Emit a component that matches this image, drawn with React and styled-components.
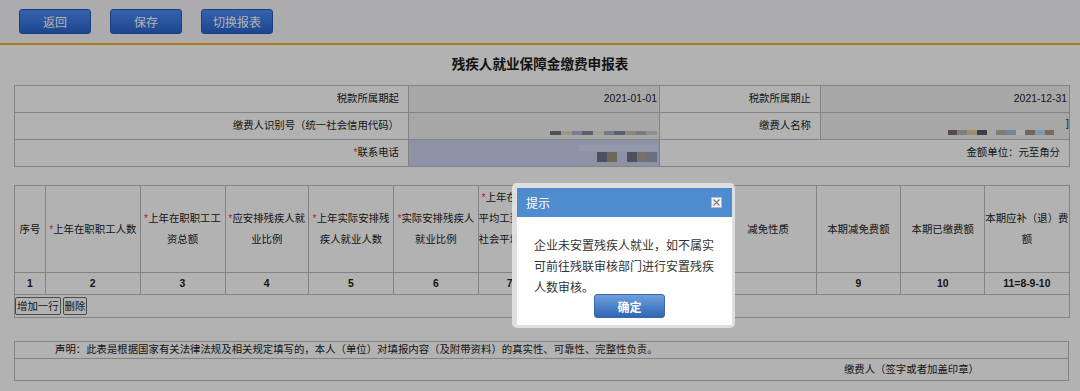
import styled, { createGlobalStyle } from 'styled-components';

const GlobalStyle = createGlobalStyle`
  body {
    margin: 0;
    background: #fff;
    font-family: "Liberation Sans", "Noto Sans CJK SC", sans-serif;
    color: #222;
  }
`;

const nameTiles = ['#72727e', '#e5d9c2', '#abb7e5', '#898995', '#f0e5d9', '#a0b7ce', '#8989a0', '#cec2ab', '#a0b7c2', '#cecece'];
const payerTiles = ['#7e6772', '#b7b7b7', '#e5cea0', '#5b5b67', 'transparent', '#b7b7a0', '#a0c2e5', '#fbfbfb', '#a0957e', '#b7d9f0', '#b7957e', '#f0f0f0'];
const phoneTiles = ['#727289', '#a0957e', 'transparent', '#727289', '#aca0a0', '#95a0b7'];

const colWidths = [31, 94.5, 85, 83.5, 85, 84.6, 63, 89.5, 89.5, 96, 84.6, 84, 84.4];
const numbers = ['1', '2', '3', '4', '5', '6', '7', '8', '', '', '9', '10', '11=8-9-10'];

export default function App() {
  return (
    <>
      <GlobalStyle />
      <Toolbar>
        <ToolButton>返回</ToolButton>
        <ToolButton>保存</ToolButton>
        <ToolButton>切换报表</ToolButton>
      </Toolbar>
      <Title>残疾人就业保障金缴费申报表</Title>
      <Content>
        <InfoTable>
          <colgroup>
            <col style={{ width: 394 }} />
            <col style={{ width: 251 }} />
            <col style={{ width: 161 }} />
            <col style={{ width: 249 }} />
          </colgroup>
          <tbody>
            <tr>
              <Label>税款所属期起</Label>
              <Value>2021-01-01</Value>
              <Label>税款所属期止</Label>
              <Value>2021-12-31</Value>
            </tr>
            <tr>
              <Label>缴费人识别号（统一社会信用代码）</Label>
              <Value $bottom>
                <Mosaic>{nameTiles.map((c, i) => <Tile key={i} $c={c} $w={10.7} $h={4} />)}</Mosaic>
              </Value>
              <Label>缴费人名称</Label>
              <Value $bottom>
                <Bracket>]</Bracket>
                <Mosaic $pad={3}>{payerTiles.map((c, i) => <Tile key={i} $c={c} $w={9.7} $h={5} />)}</Mosaic>
              </Value>
            </tr>
            <tr>
              <Label><Req>*</Req>联系电话</Label>
              <Value $tone="blue" $bottom>
                <Smear />
                <Mosaic>{phoneTiles.map((c, i) => <Tile key={i} $c={c} $w={10} $h={10} />)}</Mosaic>
              </Value>
              <Label colSpan={2}>金额单位：元至角分</Label>
            </tr>
          </tbody>
        </InfoTable>

        <GridTable>
          <colgroup>
            {colWidths.map((w, i) => (
              <col key={i} style={{ width: w }} />
            ))}
          </colgroup>
          <tbody>
            <HeadRow>
              <HeadCell>序号</HeadCell>
              <HeadCell><Req>*</Req>上年在职职工人数</HeadCell>
              <HeadCell><Req>*</Req>上年在职职工工<br />资总额</HeadCell>
              <HeadCell><Req>*</Req>应安排残疾人就<br />业比例</HeadCell>
              <HeadCell><Req>*</Req>上年实际安排残<br />疾人就业人数</HeadCell>
              <HeadCell><Req>*</Req>实际安排残疾人<br />就业比例</HeadCell>
              <HeadCell $top><Req>*</Req>上年在职工<br />平均工资（元）<br />社会平均工资</HeadCell>
              <HeadCell>本期应纳费额</HeadCell>
              <HeadCell>减免类型</HeadCell>
              <HeadCell>减免性质</HeadCell>
              <HeadCell>本期减免费额</HeadCell>
              <HeadCell>本期已缴费额</HeadCell>
              <HeadCell>本期应补（退）费<br />额</HeadCell>
            </HeadRow>
            <NumRow>
              {numbers.map((n, i) => (
                <NumCell key={i}>{n}</NumCell>
              ))}
            </NumRow>
            <tr>
              <ActionCell colSpan={13}>
                <SmallButton>增加一行</SmallButton>
                <SmallButton>删除</SmallButton>
              </ActionCell>
            </tr>
          </tbody>
        </GridTable>

        <NoteTable>
          <tbody>
            <tr>
              <NoteCell $h={16}>
                声明：此表是根据国家有关法律法规及相关规定填写的，本人（单位）对填报内容（及附带资料）的真实性、可靠性、完整性负责。
              </NoteCell>
            </tr>
            <tr>
              <NoteCell $h={21} $right>缴费人（签字或者加盖印章）</NoteCell>
            </tr>
          </tbody>
        </NoteTable>
      </Content>

      <Backdrop />
      <Dialog>
        <DialogHead>
          <span>提示</span>
          <CloseBox>
            <svg width="7" height="7" viewBox="0 0 7 7">
              <path d="M0.5 0.5 L6.5 6.5 M6.5 0.5 L0.5 6.5" stroke="#777" strokeWidth="1.1" />
            </svg>
          </CloseBox>
        </DialogHead>
        <DialogBody>
          <Message>
            企业未安置残疾人就业，如不属实<br />
            可前往残联审核部门进行安置残疾<br />
            人数审核。
          </Message>
          <ConfirmRow>
            <ConfirmButton>确定</ConfirmButton>
          </ConfirmRow>
        </DialogBody>
      </Dialog>
    </>
  );
}

const Toolbar = styled.div`
  display: flex;
  gap: 19px;
  height: 34px;
  padding: 9px 19px 0;
  background: #f7f7fb;
  border-bottom: 2px solid #ffae1a;
`;

const ToolButton = styled.button`
  width: 72px;
  height: 25px;
  padding: 0;
  border: 1px solid #295ab7;
  border-radius: 3px;
  background: linear-gradient(#4c8df9, #2b65ce);
  color: #fff;
  font-family: "Noto Sans CJK SC", sans-serif;
  font-size: 12px;
`;

const Title = styled.h1`
  margin: 8px 0 0;
  line-height: 20px;
  text-align: center;
  font-family: "Noto Sans CJK SC", sans-serif;
  font-size: 13.6px;
  font-weight: bold;
  color: #1a1a1a;
`;

const Content = styled.div`
  display: flex;
  flex-direction: column;
  padding: 0 11px 0 14px;
`;

const BaseTable = styled.table`
  width: 1055px;
  table-layout: fixed;
  border-collapse: collapse;
  font-size: 10.4px;
  line-height: 14px;
  color: #222;
  td {
    border: 1px solid #bcbcbc;
    padding: 0;
  }
`;

const InfoTable = styled(BaseTable)`
  margin-top: 12px;
  tr { height: 27px; }
`;

const Label = styled.td`
  text-align: right;
  padding-right: 9px !important;
  white-space: nowrap;
`;

const Value = styled.td`
  text-align: right;
  padding-right: 2px !important;
  background: ${p => (p.$tone === 'blue' ? '#cbd2f0' : '#f0f0f0')};
  vertical-align: ${p => (p.$bottom ? 'bottom' : 'middle')};
  padding-bottom: ${p => (p.$bottom ? '4px' : '0')} !important;
`;

const Req = styled.span`
  color: #ff3030;
`;

const Mosaic = styled.div`
  display: flex;
  justify-content: flex-end;
  padding-right: ${p => (p.$pad ?? 0)}px;
`;

const Tile = styled.span`
  display: block;
  width: ${p => p.$w}px;
  height: ${p => p.$h}px;
  background: ${p => p.$c};
`;

const Bracket = styled.div`
  line-height: 10px;
  color: #302060;
  margin-right: -2px;
  margin-bottom: 1px;
`;

const Smear = styled.div`
  width: 78px;
  height: 6px;
  margin-left: auto;
  margin-bottom: 1px;
  background: #d6ddf4;
`;

const GridTable = styled(BaseTable)`
  margin-top: 18px;
`;

const HeadRow = styled.tr`
  height: 87px;
`;

const HeadCell = styled.td`
  text-align: center;
  line-height: 21px;
  white-space: nowrap;
  overflow: hidden;
  vertical-align: ${p => (p.$top ? 'top' : 'middle')};
  padding-top: ${p => (p.$top ? '1px' : '0')} !important;
`;

const NumRow = styled.tr`
  height: 22px;
`;

const NumCell = styled.td`
  text-align: center;
  font-weight: bold;
  white-space: nowrap;
  overflow: hidden;
`;

const ActionCell = styled.td`
  height: 22px;
  vertical-align: middle;
`;

const SmallButton = styled.button`
  height: 18px;
  margin-right: 2px;
  padding: 0 1px;
  border: 1px solid #6a6a6a;
  border-radius: 2px;
  background: #fff;
  color: #222;
  font-family: "Noto Sans CJK SC", sans-serif;
  font-size: 10.4px;
  line-height: 16px;
`;

const NoteTable = styled(BaseTable)`
  margin-top: 23px;
`;

const NoteCell = styled.td`
  height: ${p => p.$h}px;
  text-align: ${p => (p.$right ? 'right' : 'left')};
  padding-left: ${p => (p.$right ? '0' : '40px')} !important;
  padding-right: ${p => (p.$right ? '89px' : '0')} !important;
  white-space: nowrap;
`;

const Backdrop = styled.div`
  position: fixed;
  inset: 0;
  background: rgba(0, 0, 0, 0.3);
  z-index: 10;
`;

const Dialog = styled.div`
  position: fixed;
  left: 512px;
  top: 183px;
  width: 223px;
  box-sizing: border-box;
  padding: 5px 3px 3px 5px;
  border-radius: 5px;
  background: rgba(225, 225, 225, 0.95);
  z-index: 11;
  font-family: "Noto Sans CJK SC", sans-serif;
`;

const DialogHead = styled.div`
  display: flex;
  align-items: center;
  justify-content: space-between;
  height: 29px;
  padding: 0 10px 0 9px;
  background: #4f8ccf;
  color: #fff;
  font-size: 12px;
`;

const CloseBox = styled.span`
  display: flex;
  align-items: center;
  justify-content: center;
  width: 11px;
  height: 11px;
  box-sizing: border-box;
  border: 1px solid #b8b8b8;
  background: #f4f4f4;
`;

const DialogBody = styled.div`
  background: #fff;
  padding: 17px 0 7px;
`;

const Message = styled.p`
  margin: 0;
  padding-left: 17px;
  font-size: 12px;
  line-height: 21px;
  color: #333;
  white-space: nowrap;
`;

const ConfirmRow = styled.div`
  display: flex;
  padding-left: 77px;
  margin-top: -3px;
`;

const ConfirmButton = styled.button`
  width: 71px;
  height: 24px;
  padding: 0;
  border: 1px solid #3a68ad;
  border-radius: 3px;
  background: linear-gradient(#6ea0dc, #2f66b5);
  color: #fff;
  font-family: "Noto Sans CJK SC", sans-serif;
  font-size: 12px;
  font-weight: bold;
`;
